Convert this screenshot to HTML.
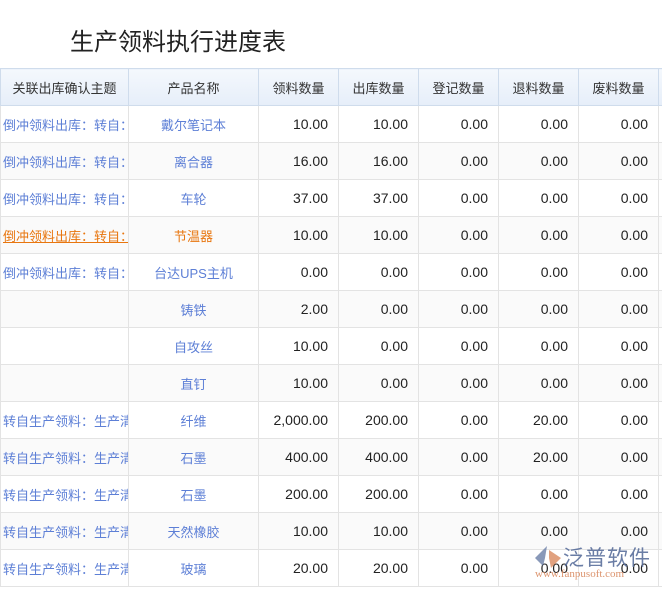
<!DOCTYPE html>
<html><head><meta charset="utf-8"><style>
body{margin:0;width:662px;height:589px;overflow:hidden;background:#fff;font-family:"Liberation Sans","Noto Sans CJK SC",sans-serif;}
h1{position:absolute;left:70px;top:22px;margin:0;font-size:24px;font-weight:normal;color:#222;}
table{position:absolute;left:0;top:68px;border-collapse:collapse;table-layout:fixed;font-size:13px;width:678px;}
td,th{border:1px solid #e3e3e3;height:37px;padding:0 10px 0 0;white-space:nowrap;overflow:hidden;box-sizing:border-box;}
th{font-weight:normal;color:#333;background:linear-gradient(#f4f8fd,#e6eef9);border-color:#cfdcec;padding:0;}
td{text-align:right;color:#222;font-size:14px;}
td.l{text-align:left;padding:0 0 0 2px;color:#5d7fd6;font-size:13px;}
td.c{text-align:center;color:#5d7fd6;padding:0;font-size:13px;}
tr:nth-child(odd) td{background:#fafafa;}
tr.h td.l{color:#e8760f;text-decoration:underline;}
tr.h td.c{color:#e8760f;}
.wm{position:absolute;left:533px;top:544px;width:130px;height:40px;white-space:nowrap;}
</style></head><body>
<h1>生产领料执行进度表</h1>
<table>
<colgroup><col style="width:128px"><col style="width:130px"><col style="width:80px"><col style="width:80px"><col style="width:80px"><col style="width:80px"><col style="width:80px"><col style="width:20px"></colgroup>
<tr><th>关联出库确认主题</th><th>产品名称</th><th>领料数量</th><th>出库数量</th><th>登记数量</th><th>退料数量</th><th>废料数量</th><th></th></tr>
<tr><td class="l">倒冲领料出库：转自：</td><td class="c">戴尔笔记本</td><td>10.00</td><td>10.00</td><td>0.00</td><td>0.00</td><td>0.00</td><td></td></tr>
<tr><td class="l">倒冲领料出库：转自：</td><td class="c">离合器</td><td>16.00</td><td>16.00</td><td>0.00</td><td>0.00</td><td>0.00</td><td></td></tr>
<tr><td class="l">倒冲领料出库：转自：</td><td class="c">车轮</td><td>37.00</td><td>37.00</td><td>0.00</td><td>0.00</td><td>0.00</td><td></td></tr>
<tr class="h"><td class="l">倒冲领料出库：转自：</td><td class="c">节温器</td><td>10.00</td><td>10.00</td><td>0.00</td><td>0.00</td><td>0.00</td><td></td></tr>
<tr><td class="l">倒冲领料出库：转自：</td><td class="c">台达UPS主机</td><td>0.00</td><td>0.00</td><td>0.00</td><td>0.00</td><td>0.00</td><td></td></tr>
<tr><td class="l"></td><td class="c">铸铁</td><td>2.00</td><td>0.00</td><td>0.00</td><td>0.00</td><td>0.00</td><td></td></tr>
<tr><td class="l"></td><td class="c">自攻丝</td><td>10.00</td><td>0.00</td><td>0.00</td><td>0.00</td><td>0.00</td><td></td></tr>
<tr><td class="l"></td><td class="c">直钉</td><td>10.00</td><td>0.00</td><td>0.00</td><td>0.00</td><td>0.00</td><td></td></tr>
<tr><td class="l">转自生产领料：生产清</td><td class="c">纤维</td><td>2,000.00</td><td>200.00</td><td>0.00</td><td>20.00</td><td>0.00</td><td></td></tr>
<tr><td class="l">转自生产领料：生产清</td><td class="c">石墨</td><td>400.00</td><td>400.00</td><td>0.00</td><td>20.00</td><td>0.00</td><td></td></tr>
<tr><td class="l">转自生产领料：生产清</td><td class="c">石墨</td><td>200.00</td><td>200.00</td><td>0.00</td><td>0.00</td><td>0.00</td><td></td></tr>
<tr><td class="l">转自生产领料：生产清</td><td class="c">天然橡胶</td><td>10.00</td><td>10.00</td><td>0.00</td><td>0.00</td><td>0.00</td><td></td></tr>
<tr><td class="l">转自生产领料：生产清</td><td class="c">玻璃</td><td>20.00</td><td>20.00</td><td>0.00</td><td>0.00</td><td>0.00</td><td></td></tr>
</table>
<div class="wm">
<svg width="30" height="26" style="position:absolute;left:0;top:0"><path d="M14 2 L2 14 L10 22 L12 14 Z" fill="#6b7fa8" opacity=".8"/><path d="M16 6 L28 14 L18 24 L16 14 Z" fill="#d9895f" opacity=".8"/></svg>
<div style="position:absolute;left:30px;top:-2px;width:100px;font-size:21px;color:#5a6f9c;letter-spacing:1px;opacity:.9">泛普软件</div>
<div style="position:absolute;left:2px;top:24px;font-family:'Liberation Serif',serif;font-size:11px;color:#d9895f;opacity:.9">www.fanpusoft.com</div>
</div>
</body></html>
